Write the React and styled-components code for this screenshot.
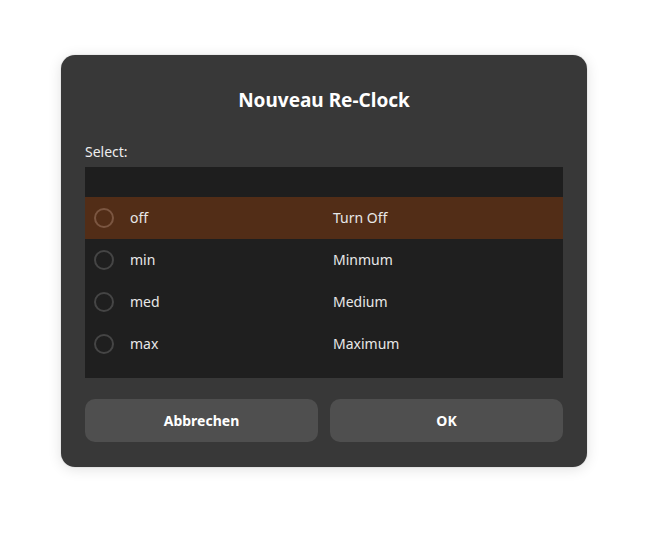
import React from 'react';
import styled, { createGlobalStyle } from 'styled-components';

const Global = createGlobalStyle`
  html, body {
    margin: 0;
    background: #ffffff;
  }
  body {
    font-family: 'Noto Sans', 'DejaVu Sans', sans-serif;
  }
`;

const Page = styled.div`
  width: 648px;
  height: 534px;
  display: flex;
  justify-content: center;
  padding-top: 55px;
  box-sizing: border-box;
`;

const Dialog = styled.div`
  width: 526px;
  height: 412px;
  box-sizing: border-box;
  background: #383838;
  border-radius: 14px;
  box-shadow: 0 2px 14px rgba(0, 0, 0, 0.12), 0 0 0 1px rgba(0, 0, 0, 0.04);
  padding: 0 24px;
  display: flex;
  flex-direction: column;
  color: #ffffff;
`;

const Title = styled.h1`
  margin: 0;
  padding-top: 32px;
  height: 26px;
  line-height: 26px;
  font-size: 19px;
  font-weight: 700;
  text-align: center;
`;

const Label = styled.div`
  margin-top: 29px;
  font-size: 14px;
  line-height: 20px;
  color: #eeeeee;
`;

const List = styled.div`
  margin-top: 5px;
  background: #1f1f1f;
  height: 211px;
  display: flex;
  flex-direction: column;
`;

const ListHead = styled.div`
  height: 30px;
  background: #1e1e1e;
`;

const Row = styled.div`
  height: 42px;
  box-sizing: border-box;
  padding-bottom: 2px;
  display: grid;
  grid-template-columns: 45px 203px 1fr;
  align-items: center;
  background: ${p => (p.selected ? '#522d17' : 'transparent')};
  font-size: 14px;
  color: #e8e8e8;
`;

const Radio = styled.span`
  justify-self: start;
  margin: 2px 0 0 9px;
  width: 16px;
  height: 16px;
  border-radius: 50%;
  border: 2px solid ${p => (p.selected ? '#7b5641' : '#454545')};
`;

const Buttons = styled.div`
  margin-top: 21px;
  display: grid;
  grid-template-columns: 1fr 1fr;
  gap: 12px;
`;

const Button = styled.button`
  height: 43px;
  border: 0;
  border-radius: 10px;
  background: #4f4f4f;
  color: #ffffff;
  font-family: 'Noto Sans', 'DejaVu Sans', sans-serif;
  font-size: 14px;
  font-weight: 700;
`;

const rows = [
  { key: 'off', label: 'Turn Off' },
  { key: 'min', label: 'Minmum' },
  { key: 'med', label: 'Medium' },
  { key: 'max', label: 'Maximum' },
];

export default function App() {
  return (
    <>
      <Global />
      <Page>
        <Dialog>
          <Title>Nouveau Re-Clock</Title>
          <Label>Select:</Label>
          <List>
            <ListHead />
            {rows.map((r, i) => (
              <Row key={r.key} selected={i === 0}>
                <Radio selected={i === 0} />
                <span>{r.key}</span>
                <span>{r.label}</span>
              </Row>
            ))}
          </List>
          <Buttons>
            <Button>Abbrechen</Button>
            <Button>OK</Button>
          </Buttons>
        </Dialog>
      </Page>
    </>
  );
}
